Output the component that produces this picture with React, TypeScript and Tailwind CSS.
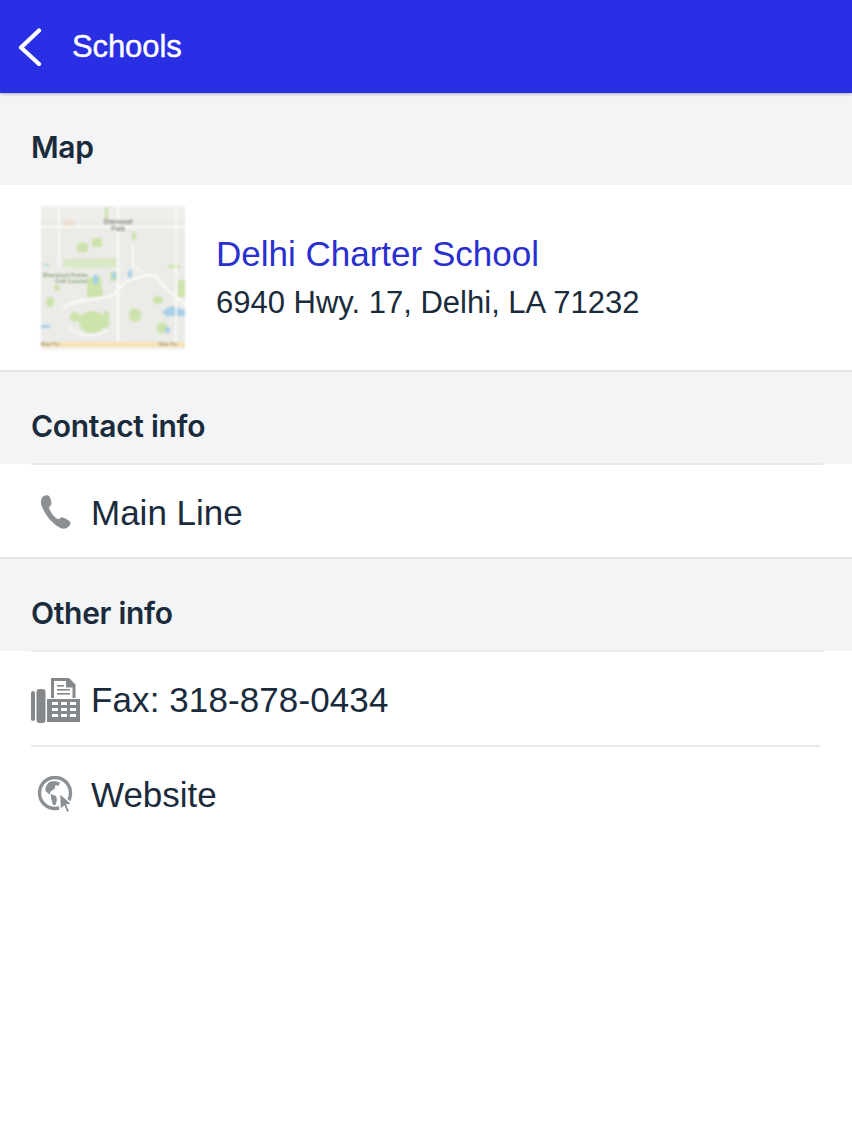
import React from "react";

const font = { fontFamily: '"Liberation Sans", Arial, sans-serif' };
const heading = { fontFamily: '"Inter", "Liberation Sans", Arial, sans-serif' };

function MapThumb() {
  return (
    <svg width="144" height="144" viewBox="0 0 144 144" className="shrink-0 block" style={{ filter: "blur(0.9px)" }}>
      <rect width="144" height="144" fill="#ebebe8" />
      <rect x="22" y="13" width="12" height="9" fill="#eddcc8" opacity="0.7" />
      <rect x="0" y="0" width="144" height="14" fill="#efeeea" />
      <g fill="#cde3ac">
        <rect x="64" y="2" width="3" height="12" />
        <rect x="36" y="37" width="11" height="9" rx="2" />
        <rect x="51" y="32" width="10" height="9" rx="2" />
        <rect x="91" y="26" width="4" height="8" />
        <path d="M22 53 L76 52 L76 61 L40 63 L22 60 Z" fill="#dbe8c6" />
        <path d="M46 72 L60 70 L62 90 L46 92 Z" />
        <rect x="137" y="74" width="7" height="17" />
        <rect x="127" y="59" width="12" height="3" />
        <ellipse cx="51" cy="116" rx="13" ry="11" />
        <ellipse cx="94" cy="109" rx="6" ry="7" />
        <ellipse cx="117" cy="94" rx="5" ry="4" />
        <ellipse cx="34" cy="111" rx="5" ry="5" />
        <rect x="62" y="105" width="6" height="17" rx="2" />
        <ellipse cx="9" cy="96" rx="4" ry="5" />
        <ellipse cx="16" cy="82" rx="3" ry="3" />
        <rect x="116" y="117" width="10" height="10" rx="3" />
        <rect x="69" y="66" width="7" height="9" />
      </g>
      <g fill="#a6cfe8">
        <rect x="71" y="66" width="4" height="7" rx="2" />
        <rect x="52" y="69" width="5" height="9" rx="2" />
        <rect x="87" y="64" width="4" height="8" rx="2" />
        <path d="M121 106 L130 100 L144 104 L144 110 L125 110 Z" />
        <rect x="124" y="121" width="5" height="6" rx="2" />
        <rect x="0" y="119" width="9" height="3" />
        <rect x="2" y="58" width="7" height="2" fill="#b7dcd6" />
      </g>
      <g stroke="#fbfbf9" fill="none" strokeWidth="1.8">
        <path d="M0 21 H144" strokeWidth="2.2" />
        <path d="M18 0 V60" />
        <path d="M77 0 V144" strokeWidth="2.2" />
        <path d="M135 0 V144" />
        <path d="M22 102 C30 97 36 95 44 94 C55 92 66 92 72 89 C78 85 81 77 86 75 C95 72 102 70 109 69 C114 68 118 74 122 79 C128 85 136 92 144 99" strokeWidth="2.4" />
        <path d="M92 38 V60 L100 66" />
        <path d="M28 120 C38 134 58 130 66 124" />
      </g>
      <rect y="136" width="144" height="5" fill="#f8e3b4" />
      <rect y="141" width="144" height="3" fill="#f3f2ef" />
      <text x="77" y="18" textAnchor="middle" fontSize="6.5" fill="#5c5c5c" style={font}>Sherwood</text>
      <text x="77" y="25" textAnchor="middle" fontSize="6.5" fill="#5c5c5c" style={font}>Park</text>
      <text x="24" y="71" textAnchor="middle" fontSize="6" fill="#658a50" style={font}>Sherwood Pointe</text>
      <text x="30" y="77" textAnchor="middle" fontSize="6" fill="#658a50" style={font}>Golf Course</text>
      <text x="0" y="140" fontSize="5" fill="#777" style={font}>Rive Trc</text>
      <text x="118" y="140" fontSize="5" fill="#777" style={font}>Rive Trc</text>
    </svg>
  );
}

function PhoneIcon() {
  return (
    <svg width="32" height="34" viewBox="2 1.4 27.4 31" className="block">
      <path d="M3.5 3 C5 1.5 8 1 9.5 2.2 C10.8 4 11.6 7.5 11.6 9.5 C11.2 11 9.6 11.6 9.4 13 C10.5 17 14 21.5 17.4 23.5 C18.8 23.6 19.6 22 21 21.7 C23.5 22.2 27.5 24.4 28.6 26 C29.4 27.8 28 30 26 31.2 C23.6 32.6 20.5 32.4 17 30 C10.5 25.5 5 18 2.5 11 C1.6 8 2 4.8 3.5 3 Z" fill="#8b9094" />
    </svg>
  );
}

function FaxIcon() {
  return (
    <svg width="50" height="46" viewBox="0 0 50 46" className="block">
      <g fill="#85888b">
        <rect x="0" y="14" width="4" height="30" rx="2" />
        <rect x="5.5" y="12" width="9" height="34" rx="3" />
        <path d="M20 1 H38 L44.5 7.5 V21 H20 Z" />
        <path d="M23 4 H35 V10.5 H41.5 V21 H23 Z" fill="#ffffff" />
        <rect x="26" y="8" width="7" height="1.6" />
        <rect x="26" y="12" width="13" height="1.6" />
        <rect x="26" y="16" width="13" height="1.6" />
        <path d="M16 22 H49 V45 H16 Z" />
      </g>
      <g fill="#ffffff">
        {[25, 31, 37].map((y) =>
          [21, 30, 39].map((x) => <rect key={`${x}-${y}`} x={x} y={y} width="6" height="3" />)
        )}
      </g>
    </svg>
  );
}

function WebIcon() {
  return (
    <svg width="38" height="38" viewBox="0 0 38 38" className="block">
      <circle cx="18" cy="17" r="15.5" fill="none" stroke="#8b9094" strokeWidth="3.4" />
      <path d="M12 6 C15 4.6 20 5 23 6.5 L21.5 10 L18.5 9 L17.5 13 L14 15 L12.5 18.5 L8.5 15 L8.5 11 Z" fill="#8b9094" />
      <path d="M13.5 18 L19 20 L20 24 L18.5 29 L16 29 L14.5 24 Z" fill="#8b9094" />
      <path d="M22.5 17 L35 28 L30 29 L33 35.5 L30 37 L27 30.5 L23 34 Z" fill="#8b9094" stroke="#ffffff" strokeWidth="1.6" />
    </svg>
  );
}

function SectionHead({ children }: { children: React.ReactNode }) {
  return (
    <div className="h-[92px] shrink-0 bg-[#f3f4f5] px-[31px] pt-[16px] flex items-center">
      <span className="text-[30px] leading-none font-semibold text-[#1a2b3c] tracking-[-0.3px]" style={heading}>{children}</span>
    </div>
  );
}

export default function App() {
  return (
    <div className="w-[852px] h-[1136px] bg-white overflow-hidden flex flex-col" style={font}>
      <header className="h-[93px] shrink-0 bg-[#2a2fe6] flex items-center pl-[18px] gap-[30px] shadow-[0_1px_3px_rgba(0,0,0,0.3)] relative">
        <svg width="24" height="38" viewBox="0 0 24 38" className="block" fill="none" stroke="#ffffff" strokeWidth="4.2" strokeLinecap="round" strokeLinejoin="round">
          <path d="M21 2.5 L3 19.5 L21 36" />
        </svg>
        <span className="text-[31px] leading-none text-white tracking-[-0.1px] [-webkit-text-stroke:0.4px_white]">Schools</span>
      </header>

      <SectionHead>Map</SectionHead>
      <div className="h-[187px] shrink-0 bg-white border-b-2 border-[#e2e3e5] flex items-center pl-[41px] gap-[31px]">
        <MapThumb />
        <div className="flex flex-col gap-[13px] pt-[2px]">
          <span className="text-[35px] leading-[36px] text-[#2a2fd0]">Delhi Charter School</span>
          <span className="text-[31px] leading-[36px] text-[#1a2b3c]">6940 Hwy. 17, Delhi, LA 71232</span>
        </div>
      </div>

      <SectionHead>Contact info</SectionHead>
      <div className="h-[95px] shrink-0 bg-white border-b-2 border-[#e2e3e5] relative flex items-center pl-[40px] gap-[19px] pt-[3px]">
        <div className="absolute left-[31px] right-[29px] top-[-1px] h-[2px] bg-[#e8e9eb]" />
        <PhoneIcon />
        <span className="text-[35px] leading-none text-[#1a2b3c]">Main Line</span>
      </div>

      <SectionHead>Other info</SectionHead>
      <div className="h-[95px] shrink-0 bg-white relative flex items-center pl-[31px] gap-[10px] pt-[2px]">
        <div className="absolute left-[31px] right-[29px] top-[-1px] h-[2px] bg-[#e8e9eb]" />
        <FaxIcon />
        <span className="text-[35px] leading-none text-[#1a2b3c] tracking-[0.1px]">Fax: 318-878-0434</span>
      </div>
      <div className="h-[95px] shrink-0 bg-white relative flex items-center pl-[37px] gap-[16px] pt-[2px]">
        <div className="absolute left-[31px] right-[32px] top-[-1px] h-[2px] bg-[#e8e9eb]" />
        <WebIcon />
        <span className="text-[35px] leading-none text-[#1a2b3c]">Website</span>
      </div>
    </div>
  );
}
